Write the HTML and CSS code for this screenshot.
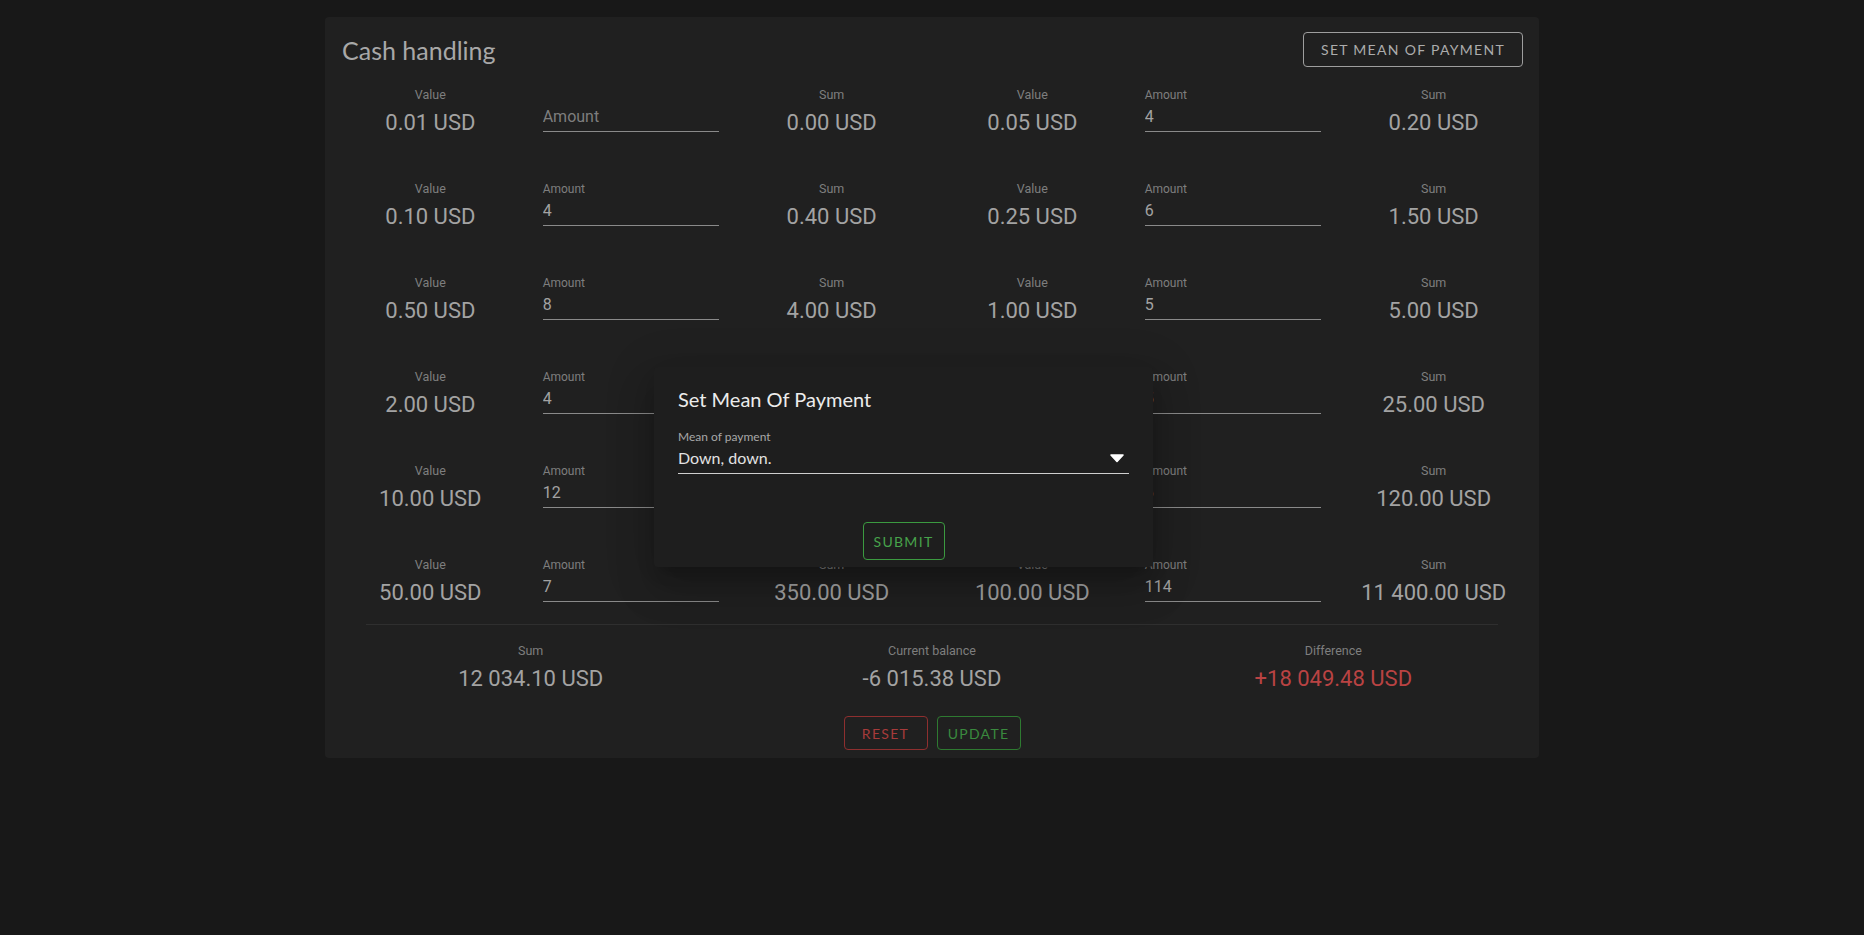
FILE: index.html
```html
<!DOCTYPE html>
<html>

<head>
    <link rel="stylesheet" href="styles.css">
</head>

<body>
    <div class="card">
        <div class="card-header">
            <h1 class="card-title">Cash handling</h1>
            <button class="btn btn-light">Set mean of payment</button>
        </div>

        <div class="denoms">
            <!-- row 1 -->
            <div class="cell"><div class="cell-label">Value</div><div class="cell-value">0.01 USD</div></div>
            <div class="amount"><div class="amount-label"></div><input class="amount-input" type="text" placeholder="Amount"></div>
            <div class="cell"><div class="cell-label">Sum</div><div class="cell-value">0.00 USD</div></div>
            <div class="cell"><div class="cell-label">Value</div><div class="cell-value">0.05 USD</div></div>
            <div class="amount"><div class="amount-label">Amount</div><input class="amount-input" type="text" value="4"></div>
            <div class="cell"><div class="cell-label">Sum</div><div class="cell-value">0.20 USD</div></div>

            <!-- row 2 -->
            <div class="cell"><div class="cell-label">Value</div><div class="cell-value">0.10 USD</div></div>
            <div class="amount"><div class="amount-label">Amount</div><input class="amount-input" type="text" value="4"></div>
            <div class="cell"><div class="cell-label">Sum</div><div class="cell-value">0.40 USD</div></div>
            <div class="cell"><div class="cell-label">Value</div><div class="cell-value">0.25 USD</div></div>
            <div class="amount"><div class="amount-label">Amount</div><input class="amount-input" type="text" value="6"></div>
            <div class="cell"><div class="cell-label">Sum</div><div class="cell-value">1.50 USD</div></div>

            <!-- row 3 -->
            <div class="cell"><div class="cell-label">Value</div><div class="cell-value">0.50 USD</div></div>
            <div class="amount"><div class="amount-label">Amount</div><input class="amount-input" type="text" value="8"></div>
            <div class="cell"><div class="cell-label">Sum</div><div class="cell-value">4.00 USD</div></div>
            <div class="cell"><div class="cell-label">Value</div><div class="cell-value">1.00 USD</div></div>
            <div class="amount"><div class="amount-label">Amount</div><input class="amount-input" type="text" value="5"></div>
            <div class="cell"><div class="cell-label">Sum</div><div class="cell-value">5.00 USD</div></div>

            <!-- row 4 -->
            <div class="cell"><div class="cell-label">Value</div><div class="cell-value">2.00 USD</div></div>
            <div class="amount"><div class="amount-label">Amount</div><input class="amount-input" type="text" value="4"></div>
            <div class="cell"><div class="cell-label">Sum</div><div class="cell-value">8.00 USD</div></div>
            <div class="cell"><div class="cell-label">Value</div><div class="cell-value">5.00 USD</div></div>
            <div class="amount"><div class="amount-label">Amount</div><input class="amount-input" type="text" value="5"></div>
            <div class="cell"><div class="cell-label">Sum</div><div class="cell-value">25.00 USD</div></div>

            <!-- row 5 -->
            <div class="cell"><div class="cell-label">Value</div><div class="cell-value">10.00 USD</div></div>
            <div class="amount"><div class="amount-label">Amount</div><input class="amount-input" type="text" value="12"></div>
            <div class="cell"><div class="cell-label">Sum</div><div class="cell-value">120.00 USD</div></div>
            <div class="cell"><div class="cell-label">Value</div><div class="cell-value">20.00 USD</div></div>
            <div class="amount"><div class="amount-label">Amount</div><input class="amount-input" type="text" value="6"></div>
            <div class="cell"><div class="cell-label">Sum</div><div class="cell-value">120.00 USD</div></div>

            <!-- row 6 -->
            <div class="cell"><div class="cell-label">Value</div><div class="cell-value">50.00 USD</div></div>
            <div class="amount"><div class="amount-label">Amount</div><input class="amount-input" type="text" value="7"></div>
            <div class="cell"><div class="cell-label">Sum</div><div class="cell-value">350.00 USD</div></div>
            <div class="cell"><div class="cell-label">Value</div><div class="cell-value">100.00 USD</div></div>
            <div class="amount"><div class="amount-label">Amount</div><input class="amount-input" type="text" value="114"></div>
            <div class="cell"><div class="cell-label">Sum</div><div class="cell-value">11 400.00 USD</div></div>
        </div>

        <div class="divider"></div>

        <div class="summary">
            <div class="cell"><div class="cell-label">Sum</div><div class="cell-value">12 034.10 USD</div></div>
            <div class="cell"><div class="cell-label">Current balance</div><div class="cell-value">-6 015.38 USD</div></div>
            <div class="cell"><div class="cell-label">Difference</div><div class="cell-value negative">+18 049.48 USD</div></div>
        </div>

        <div class="actions">
            <button class="btn btn-red">Reset</button>
            <button class="btn btn-green">Update</button>
        </div>
    </div>

    <div class="dialog">
        <h2 class="dialog-title">Set Mean Of Payment</h2>
        <label class="select-label" for="mean">Mean of payment</label>
        <div class="select">
            <span id="mean">Down, down.</span>
            <svg width="16" height="10" viewBox="0 0 16 10">
                <path d="M2 2h12l-6 6.5z" fill="#fff" stroke="#fff" stroke-width="1.6" stroke-linejoin="round"/>
            </svg>
        </div>
        <div class="dialog-actions">
            <button class="btn btn-submit">Submit</button>
        </div>
    </div>
</body>

</html>
```

FILE: styles.css
```css
body {
    margin: 0;
    background-color: #181818;
    font-family: "Roboto", "Liberation Sans", sans-serif;
}

.card {
    width: 1214px;
    margin: 17px auto 0;
    padding-bottom: 8px;
    background-color: #202020;
    border-radius: 4px;
}

.card-header {
    display: flex;
    justify-content: space-between;
    align-items: center;
    padding: 15px 16px 0 17px;
}

.card-title {
    margin: 0;
    font-family: "Lato", "Noto Sans", sans-serif;
    font-size: 25px;
    font-weight: 400;
    color: #a8a8a8;
}

.btn {
    height: 34px;
    padding: 0 16px;
    background: transparent;
    border: 1px solid #9e9e9e;
    border-radius: 4px;
    font-family: "Lato", "Noto Sans", sans-serif;
    font-size: 14px;
    letter-spacing: 1.3px;
    text-transform: uppercase;
    cursor: pointer;
}

.btn-light {
    height: 35px;
    padding: 0 17px;
    color: #acacac;
}

.denoms {
    display: grid;
    grid-template-columns: repeat(6, 1fr);
    row-gap: 43px;
    padding: 0 5px;
    margin-top: 20px;
}

.cell {
    text-align: center;
}

.cell-label,
.amount-label {
    height: 16px;
    font-size: 12.5px;
    line-height: 16px;
    color: #7e7e7e;
}

.cell-value {
    margin-top: 5px;
    font-size: 22px;
    line-height: 30px;
    color: #a3a3a3;
}

.cell-value.negative {
    color: #b94343;
}

.amount {
    padding: 0 12px;
}

.amount-label {
    font-size: 12px;
}

.amount-input {
    display: block;
    width: 100%;
    height: 29px;
    box-sizing: border-box;
    padding: 0 0 2px;
    background: transparent;
    border: none;
    border-bottom: 1px solid #8a8a8a;
    outline: none;
    font-family: "Roboto", "Liberation Sans", sans-serif;
    font-size: 16px;
    color: #a3a3a3;
}

.amount-input::placeholder {
    color: #7e7e7e;
}

.divider {
    height: 1px;
    margin: 16px 41px 0;
    background-color: #2f2f2f;
}

.summary {
    display: grid;
    grid-template-columns: repeat(3, 1fr);
    padding: 0 5px;
    margin-top: 18px;
}

.actions {
    display: flex;
    justify-content: center;
    gap: 9px;
    margin-top: 22px;
}

.btn-red,
.btn-green {
    width: 84px;
    padding: 0;
}

.btn-red {
    border-color: #8e2f2f;
    color: #a63b3b;
}

.btn-green {
    border-color: #2e7a31;
    color: #3a8a3e;
}

/* modal */
.dialog {
    position: absolute;
    left: 654px;
    top: 367px;
    width: 499px;
    height: 200px;
    box-sizing: border-box;
    padding: 20px 24px 0;
    background-color: #1e1e1e;
    border-radius: 4px;
    box-shadow: 0 11px 15px -7px rgba(0, 0, 0, 0.2),
        0 24px 38px 3px rgba(0, 0, 0, 0.14),
        0 9px 46px 8px rgba(0, 0, 0, 0.12);
}

.dialog-title {
    margin: 0;
    font-family: "Lato", "Noto Sans", sans-serif;
    font-size: 20px;
    font-weight: 400;
    line-height: 24px;
    color: #ececec;
}

.select-label {
    display: block;
    margin-top: 18px;
    font-family: "Lato", "Noto Sans", sans-serif;
    font-size: 12px;
    line-height: 16px;
    color: #a8a8a8;
}

.select {
    display: flex;
    justify-content: space-between;
    align-items: center;
    padding: 1px 4px 3px 0;
    border-bottom: 1px solid #cfcfcf;
    font-family: "Lato", "Noto Sans", sans-serif;
    font-size: 16px;
    line-height: 24px;
    color: #e2e2e2;
}

.dialog-actions {
    display: flex;
    justify-content: center;
    margin-top: 48px;
}

.btn-submit {
    width: 68px;
    height: 36px;
    padding: 0 6px;
    box-sizing: content-box;
    border-color: #3b9a40;
    color: #47a24b;
}
```
